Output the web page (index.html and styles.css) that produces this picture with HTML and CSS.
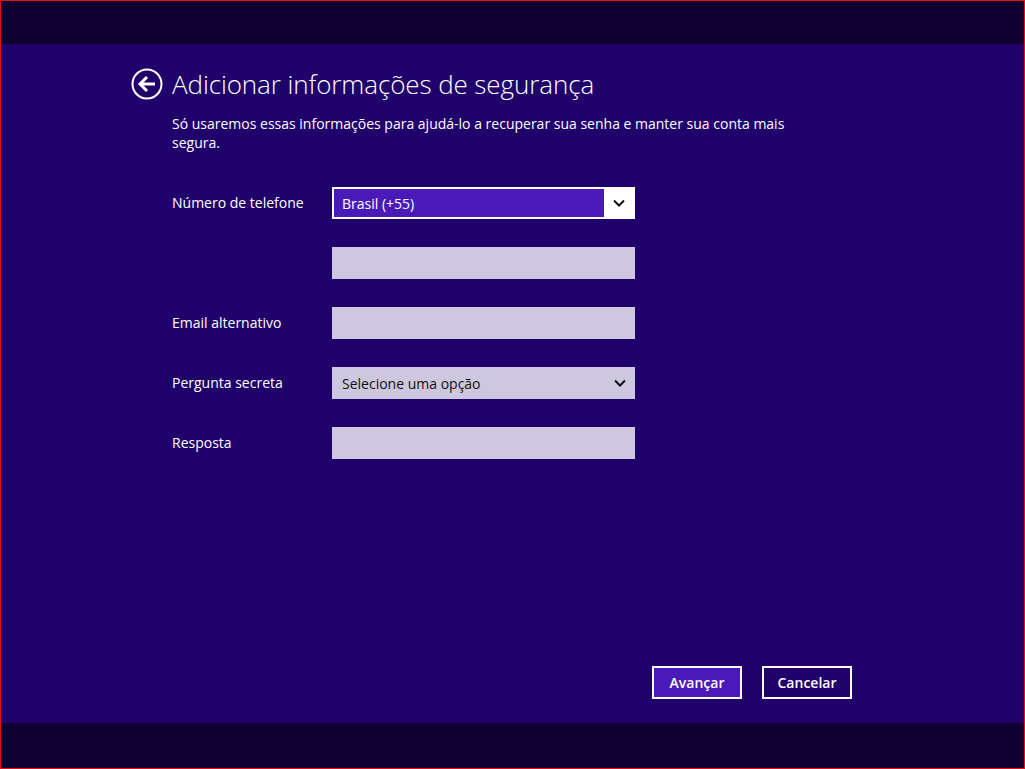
FILE: index.html
```html
<!DOCTYPE html>
<html lang="pt-BR">
<head>
<meta charset="UTF-8">
<title>Adicionar informações de segurança</title>
<link rel="stylesheet" href="styles.css">
</head>
<body>
<div class="screen">
  <div class="topbar"></div>
  <div class="main">
    <div class="header">
      <div class="back">
        <svg width="32" height="32" viewBox="0 0 32 32">
          <circle cx="16" cy="16" r="14.5" fill="none" stroke="#fff" stroke-width="2"/>
          <path d="M16 9 L9 16 L16 23" fill="none" stroke="#fff" stroke-width="3"/>
          <path d="M9.5 16 H24" fill="none" stroke="#fff" stroke-width="3"/>
        </svg>
      </div>
      <h1 class="title">Adicionar informações de segurança</h1>
    </div>
    <div class="content">
      <p class="desc">Só usaremos essas informações para ajudá-lo a recuperar sua senha e manter sua conta mais segura.</p>

      <div class="form">
        <div class="label">Número de telefone</div>
        <div class="field">
          <div class="select active">
            <span class="value">Brasil (+55)</span>
            <span class="arrow">
              <svg width="12" height="8" viewBox="0 0 12 8"><path d="M1 1.5 L6 6.5 L11 1.5" fill="none" stroke="#111" stroke-width="2"/></svg>
            </span>
          </div>
        </div>

        <div class="label"></div>
        <div class="field"><div class="input"></div></div>

        <div class="label">Email alternativo</div>
        <div class="field"><div class="input"></div></div>

        <div class="label">Pergunta secreta</div>
        <div class="field">
          <div class="select">
            <span class="value">Selecione uma opção</span>
            <span class="arrow">
              <svg width="12" height="8" viewBox="0 0 12 8"><path d="M1 1.5 L6 6.5 L11 1.5" fill="none" stroke="#111" stroke-width="2"/></svg>
            </span>
          </div>
        </div>

        <div class="label">Resposta</div>
        <div class="field"><div class="input"></div></div>
      </div>
    </div>
    <div class="buttons">
      <div class="btn primary">Avançar</div>
      <div class="btn">Cancelar</div>
    </div>
  </div>
  <div class="bottombar"></div>
</div>
</body>
</html>
```

FILE: styles.css
```css
html, body {
  margin: 0;
  padding: 0;
}
body {
  font-family: "Open Sans", "Noto Sans", sans-serif;
  color: #fff;
  background: #10002e;
}
.screen {
  width: 1025px;
  height: 769px;
  box-sizing: border-box;
  border: 1px solid #e0101c;
  display: flex;
  flex-direction: column;
  background: #20006a;
}
.topbar {
  height: 43px;
  background: #0f0030;
}
.bottombar {
  height: 45px;
  background: #0f0030;
}
.main {
  flex: 1;
  position: relative;
}

/* header */
.header {
  display: flex;
  align-items: center;
  margin-top: 24px;
  padding-left: 130px;
  height: 32px;
}
.back {
  width: 32px;
  height: 32px;
  margin-right: 9px;
}
.back svg { display: block; }
.title {
  margin: 0;
  font-weight: 300;
  font-size: 26px;
  letter-spacing: -0.1px;
  line-height: 32px;
}

/* content */
.content {
  padding-left: 171px;
  width: 640px;
}
.desc {
  margin: 14px 0 0 0;
  font-size: 14px;
  line-height: 19px;
}
.form {
  margin-top: 35px;
  display: grid;
  grid-template-columns: 160px 303px;
  row-gap: 28px;
}
.label {
  font-size: 14px;
  line-height: 32px;
  height: 32px;
}
.field { height: 32px; }
.input {
  height: 32px;
  background: #cdc8e0;
}
.select {
  height: 32px;
  box-sizing: border-box;
  background: #cdc8e0;
  color: #111;
  display: flex;
  align-items: center;
  font-size: 14px;
}
.select .value {
  flex: 1;
  padding-left: 10px;
}
.select .arrow {
  width: 31px;
  height: 100%;
  display: flex;
  align-items: center;
  justify-content: center;
}
.select.active {
  border: 2px solid #fff;
  background: #4a1ab8;
  color: #fff;
}
.select.active .value { padding-left: 8px; }
.select.active .arrow {
  background: #fff;
  width: 29px;
}

/* buttons */
.buttons {
  position: absolute;
  right: 172px;
  bottom: 24px;
  display: flex;
  gap: 20px;
}
.btn {
  width: 90px;
  height: 33px;
  box-sizing: border-box;
  border: 2px solid #fff;
  font-size: 14px;
  font-weight: 600;
  display: flex;
  align-items: center;
  justify-content: center;
}
.btn.primary { background: #4a1ab8; }
```
